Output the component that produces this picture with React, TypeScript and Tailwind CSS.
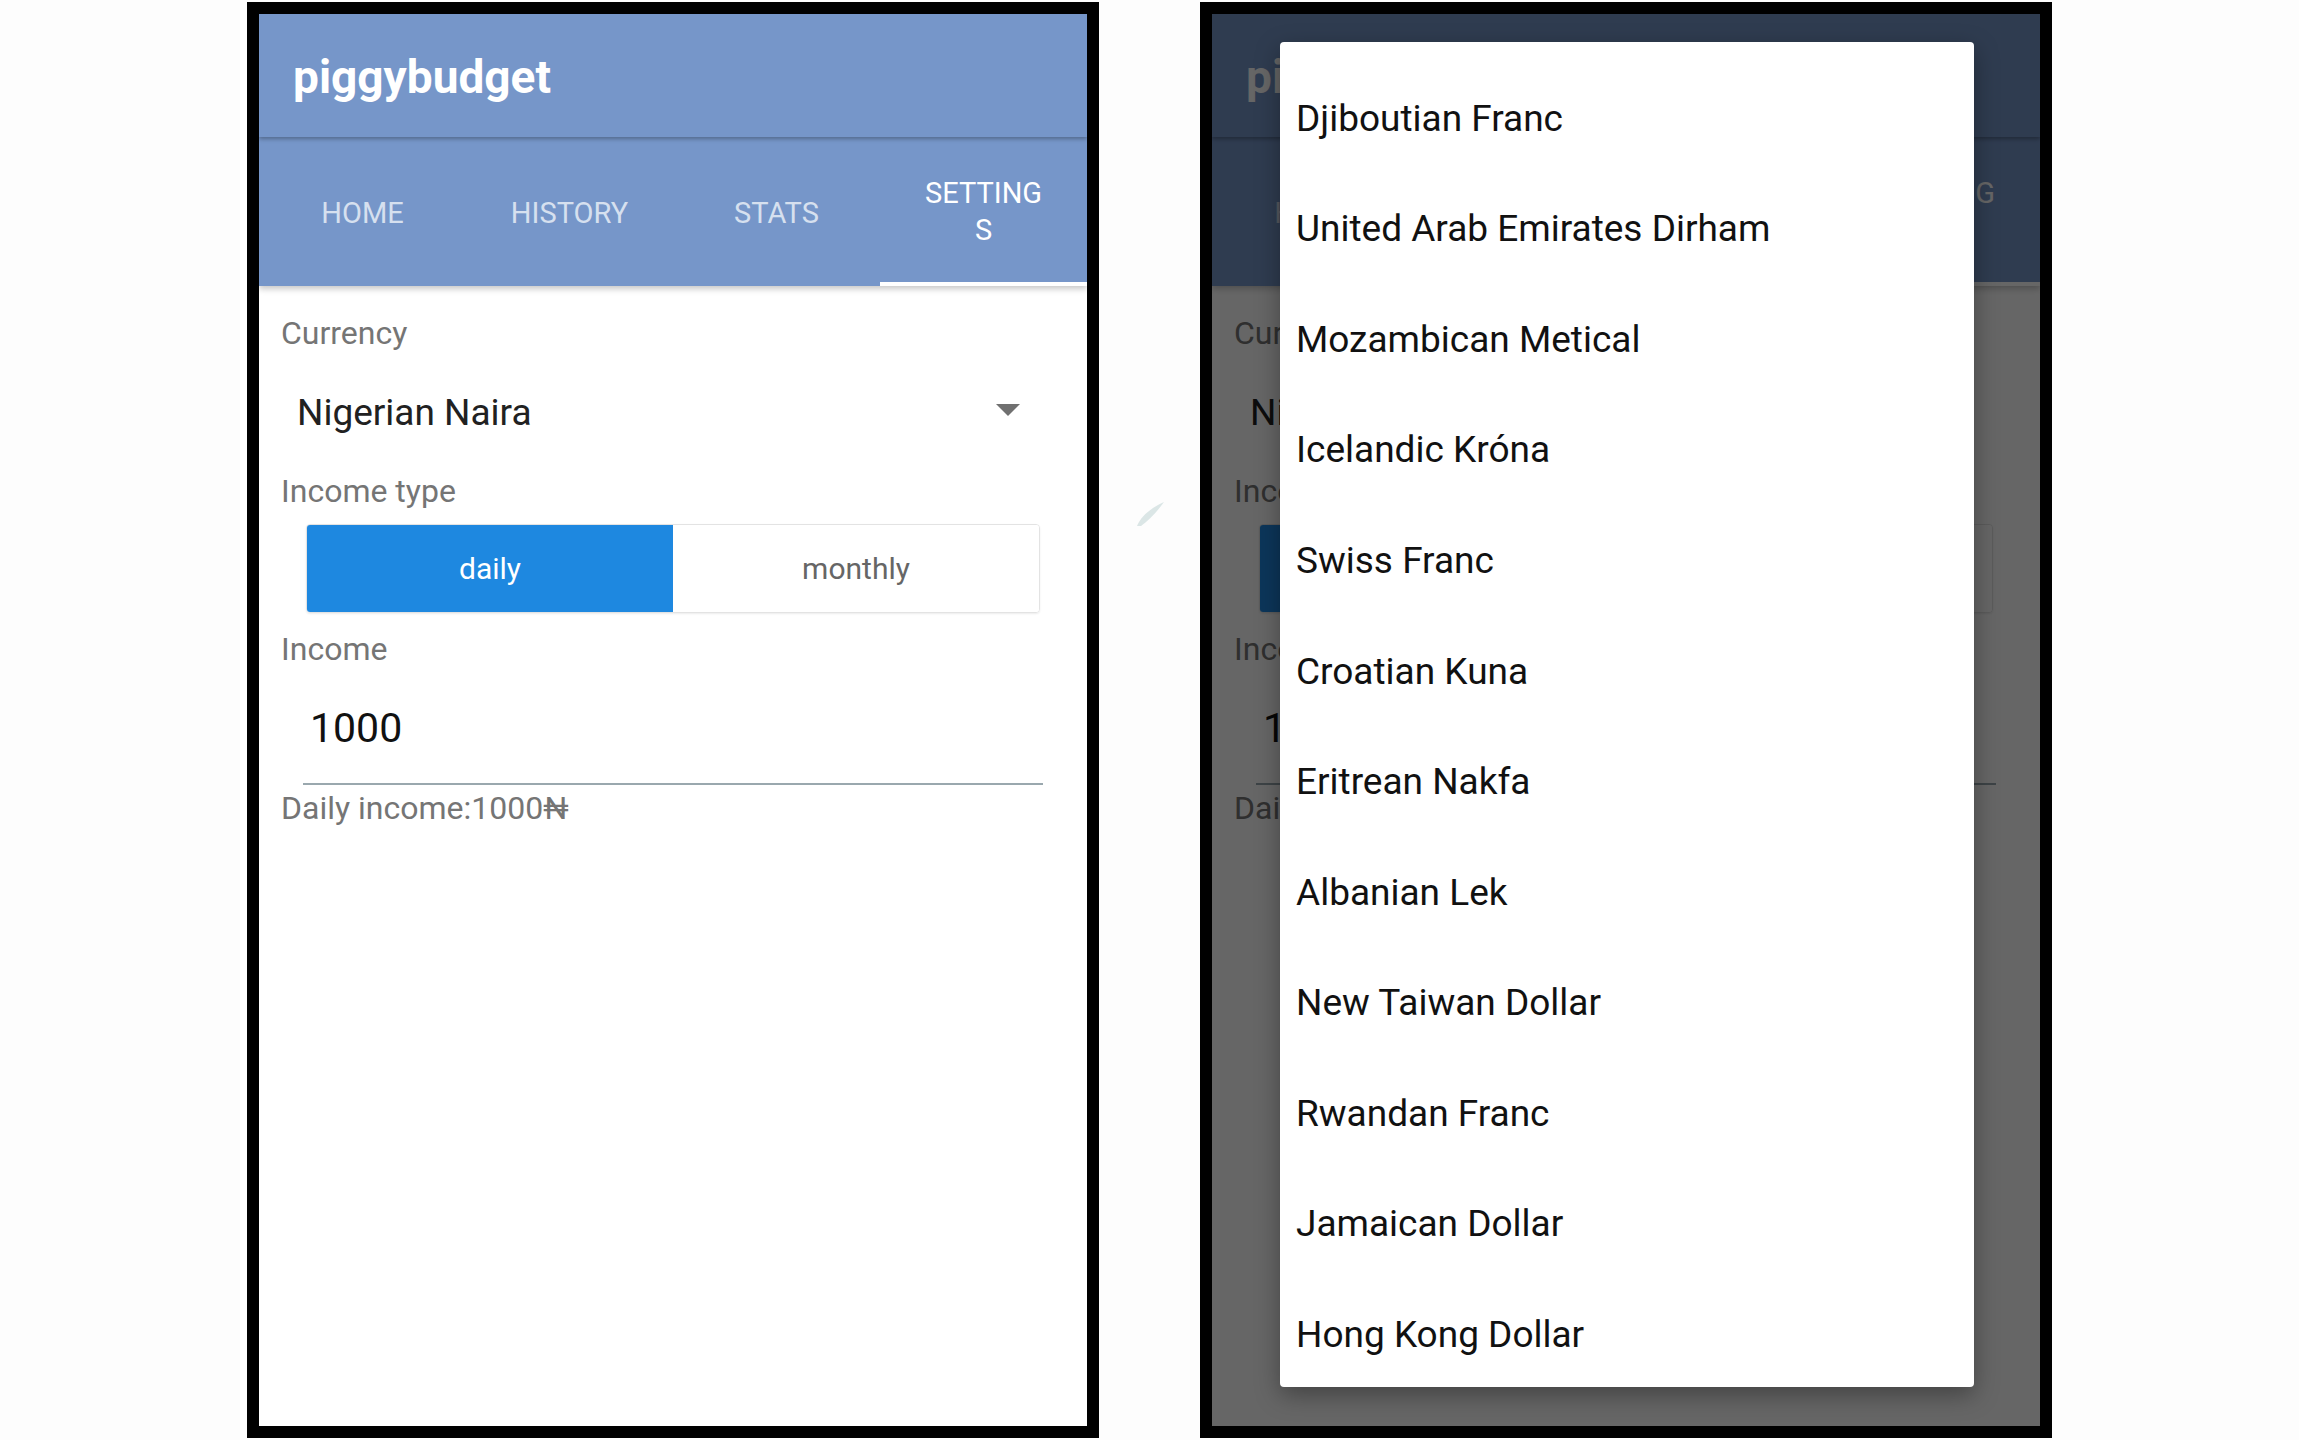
const currencies = [
  'Djiboutian Franc',
  'United Arab Emirates Dirham',
  'Mozambican Metical',
  'Icelandic Króna',
  'Swiss Franc',
  'Croatian Kuna',
  'Eritrean Nakfa',
  'Albanian Lek',
  'New Taiwan Dollar',
  'Rwandan Franc',
  'Jamaican Dollar',
  'Hong Kong Dollar',
]

const tabs = ['HOME', 'HISTORY', 'STATS']

const SettingsScreen = () => {
  return (
    <div className="flex flex-col h-full bg-white">
      <div className="relative z-20 h-[123px] flex items-center pl-[34px] pt-[3px] bg-[#7696c9] shadow-[0_2px_4px_rgba(0,0,0,0.3)]">
        <span className="text-[46px] leading-none font-bold text-white">piggybudget</span>
      </div>
      <div className="relative z-10 h-[149px] grid grid-cols-4 bg-[#7696c9] shadow-[0_3px_6px_rgba(0,0,0,0.22)]">
        {tabs.map((t) => (
          <div key={t} className="flex items-center justify-center pt-[4px] text-[29px] leading-[37px] text-[#d6e0ef]">
            {t}
          </div>
        ))}
        <div className="flex items-center justify-center pt-[4px] text-center text-[29px] leading-[37px] text-white border-b-4 border-white">
          SETTING
          <br />
          S
        </div>
      </div>
      <div className="flex flex-col pl-[22px] pr-[22px] pt-[27px]">
        <div className="h-[40px] text-[32px] leading-[40px] text-[#757575]">Currency</div>
        <div className="mt-[38px] h-[44px] flex items-start justify-between pl-[16px] pr-[45px]">
          <span className="text-[37px] leading-[44px] text-[#212121]">Nigerian Naira</span>
          <svg width="24" height="12" viewBox="0 0 24 12" className="mt-[13px]">
            <path d="M0 0 L24 0 L12 12 Z" fill="#707070" />
          </svg>
        </div>
        <div className="mt-[36px] h-[40px] text-[32px] leading-[40px] text-[#757575]">Income type</div>
        <div className="mt-[13px] mx-[25px] h-[89px] flex rounded-[4px] border border-[#e3e3e3] shadow-[0_1px_2px_rgba(0,0,0,0.08)] overflow-hidden">
          <div className="flex-1 flex items-center justify-center bg-[#1e88e0] text-white text-[30px]">daily</div>
          <div className="flex-1 flex items-center justify-center bg-white text-[#666666] text-[30px]">monthly</div>
        </div>
        <div className="mt-[16px] h-[40px] text-[32px] leading-[40px] text-[#757575]">Income</div>
        <div className="mx-[22px] pt-[35px] pb-[31px] pl-[7px] border-b-2 border-[#9aa8ae]">
          <div className="h-[48px] text-[41px] leading-[48px] text-[#111111]">1000</div>
        </div>
        <div className="mt-[3px] h-[40px] text-[32px] leading-[40px] text-[#757575]">Daily income:1000₦</div>
      </div>
    </div>
  )
}

const Phone = ({ children }: { children: React.ReactNode }) => (
  <div className="relative w-[852px] h-[1436px] border-[12px] border-black bg-white overflow-hidden shrink-0">
    {children}
  </div>
)

export default function App() {
  return (
    <div className="w-full h-[1440px] bg-[#fdfdfd] flex justify-center items-start pt-[2px] font-['Roboto',sans-serif]">
      <Phone>
        <SettingsScreen />
      </Phone>
      <div className="w-[101px] shrink-0">
        <svg width="30" height="28" viewBox="0 0 30 28" className="mt-[498px] ml-[36px]">
          <path d="M2 26 C6 16 16 8 29 2 C22 12 14 20 6 26 Z" fill="#dbe6e6" />
        </svg>
      </div>
      <Phone>
        <SettingsScreen />
        <div className="absolute inset-0 z-30 bg-black/60" />
        <div className="absolute z-40 top-[28px] left-[68px] w-[694px] h-[1345px] bg-white rounded-[4px] overflow-hidden pt-[21px] shadow-[0_8px_24px_rgba(0,0,0,0.35)]">
          {currencies.map((c) => (
            <div key={c} className="h-[110.6px] flex items-center pl-[16px] text-[37px] text-[#111111]">
              {c}
            </div>
          ))}
        </div>
      </Phone>
    </div>
  )
}
